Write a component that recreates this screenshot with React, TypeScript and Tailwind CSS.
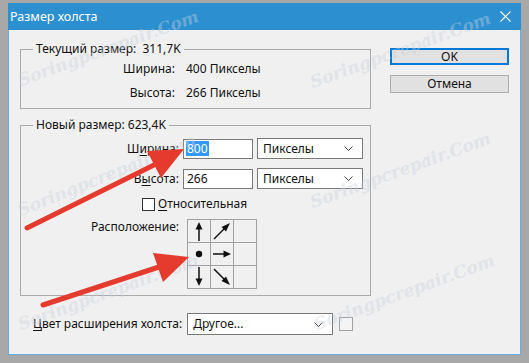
import type { ReactNode } from "react";

const FONT = "font-['Segoe_UI','Noto_Sans','Open_Sans',sans-serif]";

function Chevron() {
  return (
    <svg width="9" height="5" viewBox="0 0 9 5" className="shrink-0">
      <path d="M0.5 0.5 L4.5 4.5 L8.5 0.5" fill="none" stroke="#444" strokeWidth="1" />
    </svg>
  );
}

function Select({ value, className }: { value: string; className: string }) {
  return (
    <div className={`flex items-center justify-between border border-[#7a7a7a] bg-white pl-[5px] pr-[9px] ${className}`}>
      <span className="leading-[16px]">{value}</span>
      <Chevron />
    </div>
  );
}

function Cell({ children }: { children?: ReactNode }) {
  return (
    <div className="flex h-[23px] w-[23px] items-center justify-center border-r border-b border-[#a0a0a0]">
      {children}
    </div>
  );
}

function Arrow({ d, head }: { d: string; head: string }) {
  return (
    <svg width="22" height="22" viewBox="0 0 22 22">
      <path d={d} stroke="#111" strokeWidth="1.5" fill="none" />
      <polygon points={head} fill="#111" />
    </svg>
  );
}

export default function App() {
  return (
    <div className={`relative h-[363px] w-[529px] overflow-hidden bg-[#a8a8a8] pt-[3px] pl-[8px] text-[12px] text-[#111] ${FONT}`}>
      <div className="flex h-[352px] w-[513px] flex-col border-x border-b border-[#5fb1e6] bg-[#f0f0f0]">
        {/* title bar */}
        <div className="-mx-px flex h-[27px] items-center justify-between bg-[#2b8fd0] pl-[2px] pr-[10px] text-white">
          <span className="text-[12.5px] leading-[16px]">Размер холста</span>
          <svg width="11" height="11" viewBox="0 0 11 11">
            <path d="M0.5 0.5 L10.5 10.5 M10.5 0.5 L0.5 10.5" stroke="white" strokeWidth="1.1" />
          </svg>
        </div>

        <div className="flex pl-[11px] pt-[18px]">
          {/* left column */}
          <div className="flex w-[351px] flex-col">
            <div className="relative mt-px h-[60px] border border-[#a9a9a9]">
              <span className="absolute -top-[9px] left-[12px] bg-[#f0f0f0] px-[3px] leading-[16px]">
                Текущий размер:&nbsp; 311,7K
              </span>
              <div className="grid grid-cols-[154px_auto] gap-x-[11px] gap-y-[8px] pt-[11px] leading-[16px]">
                <span className="text-right">Ширина:</span>
                <span>400 Пикселы</span>
                <span className="text-right">Высота:</span>
                <span>266 Пикселы</span>
              </div>
            </div>

            <div className="relative mt-[16px] h-[171px] border border-[#a9a9a9]">
              <span className="absolute -top-[9px] left-[12px] bg-[#f0f0f0] px-[3px] leading-[16px]">
                Новый размер: 623,4K
              </span>
              <div className="flex flex-col pt-[12px]">
                <div className="flex h-[21px] items-center">
                  <span className="w-[158px] text-right leading-[16px]">
                    Ш<span className="underline underline-offset-2">и</span>рина:
                  </span>
                  <div className="ml-[4px] flex h-[20px] w-[70px] items-center border border-[#7a7a7a] bg-white pl-[2px]">
                    <span className="bg-[#3399ff] px-px leading-[15px] text-white">800</span>
                  </div>
                  <Select value="Пикселы" className="ml-[4px] h-[21px] w-[106px]" />
                </div>
                <div className="mt-[9px] flex h-[21px] items-center">
                  <span className="w-[158px] text-right leading-[16px]">
                    В<span className="underline underline-offset-2">ы</span>сота:
                  </span>
                  <div className="ml-[4px] flex h-[20px] w-[70px] items-center border border-[#7a7a7a] bg-white pl-[3px]">
                    <span className="leading-[15px]">266</span>
                  </div>
                  <Select value="Пикселы" className="ml-[4px] h-[21px] w-[106px]" />
                </div>
                <div className="mt-[7px] flex h-[16px] items-center">
                  <div className="ml-[121px] h-[13px] w-[13px] border border-[#333] bg-white" />
                  <span className="ml-[3px] leading-[16px]">
                    <span className="underline underline-offset-2">О</span>тносительная
                  </span>
                </div>
                <div className="mt-[7px] flex items-start">
                  <span className="w-[158px] text-right leading-[16px]">Расположение:</span>
                  <div className="ml-[8px] grid grid-cols-[repeat(3,23px)] border-t border-l border-[#a0a0a0]">
                    <Cell>
                      <Arrow d="M11 8 L11 21" head="11,2 7.5,9.5 14.5,9.5" />
                    </Cell>
                    <Cell>
                      <Arrow d="M3 19 L14 8" head="19,3 10.5,7 15,11.5" />
                    </Cell>
                    <Cell />
                    <Cell>
                      <svg width="22" height="22" viewBox="0 0 22 22">
                        <circle cx="11" cy="11" r="3.2" fill="#111" />
                      </svg>
                    </Cell>
                    <Cell>
                      <Arrow d="M2 11 L14 11" head="20,11 12.5,7.5 12.5,14.5" />
                    </Cell>
                    <Cell />
                    <Cell>
                      <Arrow d="M11 1 L11 14" head="11,20 7.5,12.5 14.5,12.5" />
                    </Cell>
                    <Cell>
                      <Arrow d="M3 3 L14 14" head="19,19 10.5,15 15,10.5" />
                    </Cell>
                    <Cell />
                  </div>
                </div>
              </div>
            </div>

            <div className="mt-[17px] flex items-center">
              <span className="ml-[13px] leading-[16px]">
                <span className="underline underline-offset-2">Ц</span>вет расширения холста:
              </span>
              <Select value="Другое..." className="ml-[5px] h-[22px] w-[146px]" />
              <div className="ml-[6px] h-[14px] w-[14px] border border-[#a0a0a0] bg-[#f4f4f4]" />
            </div>
          </div>

          {/* buttons */}
          <div className="ml-[19px] flex w-[119px] flex-col">
            <button className="flex h-[17px] items-center justify-center border-2 border-[#0078d7] bg-[#e1e1e1] leading-[14px]">
              OK
            </button>
            <button className="mt-[10px] flex h-[18px] items-center justify-center border border-[#adadad] bg-[#e1e1e1] leading-[14px]">
              Отмена
            </button>
          </div>
        </div>
      </div>

      {/* watermark */}
      <span className="pointer-events-none absolute left-[22px] top-[70px] origin-bottom-left -rotate-[20deg] font-['DejaVu_Serif',serif] text-[17px] font-bold italic leading-[20px] text-[#c9d1de] opacity-40">
        Soringpcrepair.Com
      </span>
      <span className="pointer-events-none absolute left-[314px] top-[72px] origin-bottom-left -rotate-[20deg] font-['DejaVu_Serif',serif] text-[17px] font-bold italic leading-[20px] text-[#c9d1de] opacity-40">
        Soringpcrepair.Com
      </span>
      <span className="pointer-events-none absolute left-[22px] top-[200px] origin-bottom-left -rotate-[22deg] font-['DejaVu_Serif',serif] text-[17px] font-bold italic leading-[20px] text-[#c9d1de] opacity-40">
        Soringpcrepair.Com
      </span>
      <span className="pointer-events-none absolute left-[314px] top-[192px] origin-bottom-left -rotate-[20deg] font-['DejaVu_Serif',serif] text-[17px] font-bold italic leading-[20px] text-[#c9d1de] opacity-40">
        Soringpcrepair.Com
      </span>
      <span className="pointer-events-none absolute left-[22px] top-[314px] origin-bottom-left -rotate-[20deg] font-['DejaVu_Serif',serif] text-[17px] font-bold italic leading-[20px] text-[#c9d1de] opacity-40">
        Soringpcrepair.Com
      </span>
      <span className="pointer-events-none absolute left-[318px] top-[314px] origin-bottom-left -rotate-[20deg] font-['DejaVu_Serif',serif] text-[17px] font-bold italic leading-[20px] text-[#c9d1de] opacity-40">
        Soringpcrepair.Com
      </span>

      {/* red annotation arrows */}
      <svg className="pointer-events-none absolute inset-0" width="529" height="363" viewBox="0 0 529 363">
        <line x1="27" y1="228" x2="158" y2="163" stroke="#e53a2e" strokeWidth="5" strokeLinecap="round" />
        <polygon points="184,149 161,178 147,151" fill="#e53a2e" />
        <line x1="43" y1="305" x2="162" y2="266" stroke="#e53a2e" strokeWidth="5" strokeLinecap="round" />
        <polygon points="189,257 163,282 153,253" fill="#e53a2e" />
      </svg>
    </div>
  );
}
